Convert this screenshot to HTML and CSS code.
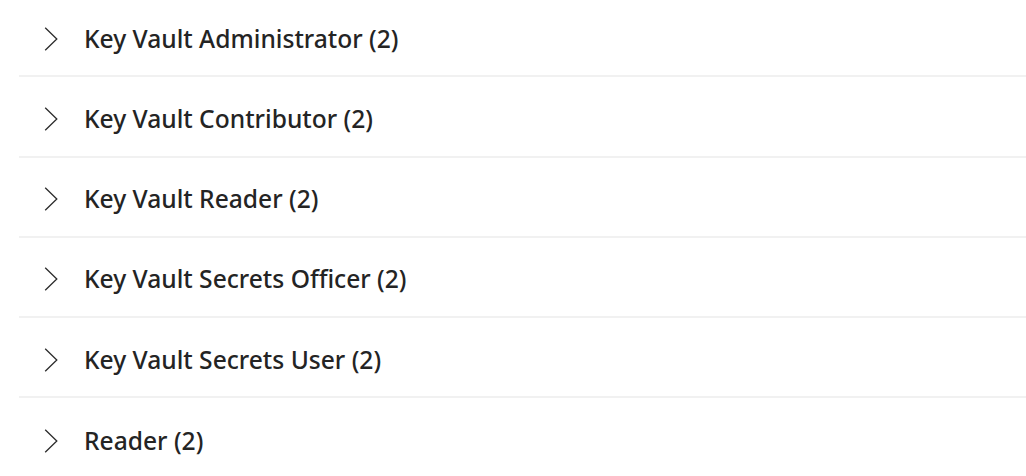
FILE: index.html
```html
<!DOCTYPE html>
<html>
<head>
<meta charset="utf-8">
<link rel="stylesheet" href="styles.css">
</head>
<body>
<ul class="roles">
  <li class="role"><svg class="chev" viewBox="0 0 14 24"><path d="M1.2 0.8 L12.8 12 L1.2 23.2"/></svg><span class="name">Key Vault Administrator (2)</span></li>
  <li class="role"><svg class="chev" viewBox="0 0 14 24"><path d="M1.2 0.8 L12.8 12 L1.2 23.2"/></svg><span class="name">Key Vault Contributor (2)</span></li>
  <li class="role"><svg class="chev" viewBox="0 0 14 24"><path d="M1.2 0.8 L12.8 12 L1.2 23.2"/></svg><span class="name">Key Vault Reader (2)</span></li>
  <li class="role"><svg class="chev" viewBox="0 0 14 24"><path d="M1.2 0.8 L12.8 12 L1.2 23.2"/></svg><span class="name">Key Vault Secrets Officer (2)</span></li>
  <li class="role"><svg class="chev" viewBox="0 0 14 24"><path d="M1.2 0.8 L12.8 12 L1.2 23.2"/></svg><span class="name">Key Vault Secrets User (2)</span></li>
  <li class="role"><svg class="chev" viewBox="0 0 14 24"><path d="M1.2 0.8 L12.8 12 L1.2 23.2"/></svg><span class="name">Reader (2)</span></li>
</ul>
</body>
</html>
```
FILE: styles.css
```css
html, body {
  margin: 0;
  padding: 0;
  background: #ffffff;
}
body {
  font-family: "Noto Sans", "Open Sans", sans-serif;
  color: #242424;
  overflow: hidden;
}
.roles {
  list-style: none;
  margin: -3px 0 0 0;
  padding: 0 0 0 19px;
}
.role {
  box-sizing: border-box;
  display: flex;
  align-items: center;
  height: 80.25px;
  padding: 5px 0 0 25px;
  border-bottom: 2px solid #f1f1f1;
}
.role:last-child {
  border-bottom: none;
}
.chev {
  width: 14px;
  height: 24px;
  flex: none;
  margin-right: 26px;
  fill: none;
  stroke: #2b2b2b;
  stroke-width: 1.3;
}
.name {
  font-size: 24.6px;
  font-weight: 500;
  line-height: 32px;
}
```
